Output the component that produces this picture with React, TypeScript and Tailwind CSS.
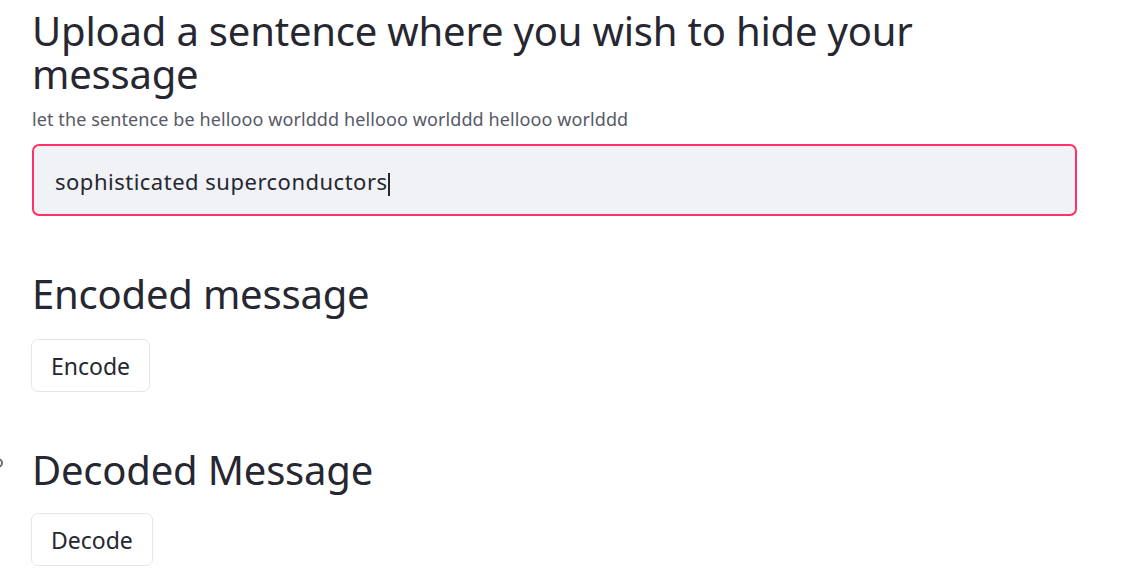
import React from 'react';

const font = { fontFamily: '"Noto Sans", "Open Sans", sans-serif' };

const Heading: React.FC<{ children: React.ReactNode }> = ({ children }) => (
  <h1 className="text-[40px] leading-[43px] font-normal text-[#262730] tracking-[-0.2px]">{children}</h1>
);

const Button: React.FC<{ label: string }> = ({ label }) => (
  <button className="-ml-[1px] h-[53px] px-[19px] rounded-[7px] border border-[#e4e5e9] bg-white text-[23px] leading-[30px] text-[#262730]">
    {label}
  </button>
);

export default function App() {
  return (
    <div className="relative w-[1129px] h-[586px] overflow-hidden bg-white" style={font}>
      {/* anchor icon peeking from the left edge */}
      <svg className="absolute left-[-6px] top-[457px]" width="10" height="14" viewBox="0 0 10 14">
        <circle cx="4" cy="6" r="4" fill="none" stroke="#6b6d75" strokeWidth="2" />
      </svg>

      <div className="flex flex-col pl-[32px] pr-[52px] pt-[9px]">
        <Heading>Upload a sentence where you wish to hide your message</Heading>
        <p className="mt-[12px] text-[18px] leading-[24px] tracking-[0.1px] text-[#575966]">
          let the sentence be hellooo worlddd hellooo worlddd hellooo worlddd
        </p>

        <div className="mt-[13px] h-[72px] rounded-[7px] border-2 border-[#ff3168] bg-[#f0f2f6] flex items-center pl-[21px] pt-[2px]">
          <span className="text-[22px] leading-[30px] tracking-[0.5px] text-[#262730]">sophisticated superconductors</span>
          <span className="w-[2px] h-[23px] bg-[#262730] mt-[6px]" />
        </div>

        <div className="mt-[56px]">
          <Heading>Encoded message</Heading>
        </div>
        <div className="mt-[24px]">
          <Button label="Encode" />
        </div>

        <div className="mt-[56px]">
          <Heading>Decoded Message</Heading>
        </div>
        <div className="mt-[22px]">
          <Button label="Decode" />
        </div>
      </div>
    </div>
  );
}
